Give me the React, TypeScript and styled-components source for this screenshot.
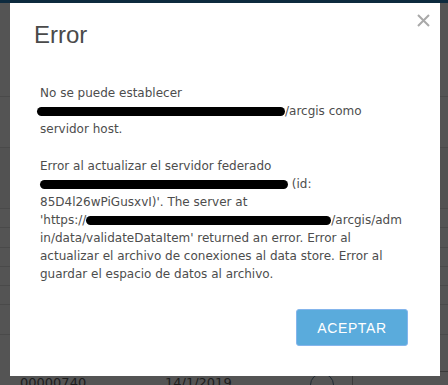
import React from "react";
import styled, { createGlobalStyle } from "styled-components";

const Global = createGlobalStyle`
  html, body { margin: 0; padding: 0; background: #545454; overflow: hidden; }
  #root { width: 448px; height: 385px; }
`;

const Screen = styled.div`
  position: relative;
  width: 448px;
  height: 385px;
  background: #545454;
  overflow: hidden;
  display: flex;
  flex-direction: column;
`;

const TopBar = styled.div`
  height: 3px;
  background: #0d2a3e;
  flex: none;
`;

const BgRow = styled.div<{ $h: number; $tone?: string }>`
  height: ${(p) => p.$h}px;
  flex: none;
  background: ${(p) => p.$tone || "#545454"};
  border-bottom: 1px solid #4a4a4a;
  box-sizing: border-box;
`;

const BottomRow = styled.div`
  flex: 1;
  display: flex;
  align-items: flex-start;
  padding-top: 40px;
  font-family: "DejaVu Sans", Verdana, sans-serif;
  font-size: 13px;
  line-height: 15px;
  color: #1c1c1c;
`;

const Cell = styled.div<{ $w: number; $pad?: number }>`
  width: ${(p) => p.$w}px;
  padding-left: ${(p) => p.$pad || 0}px;
  box-sizing: border-box;
  flex: none;
`;

const Circle = styled.div`
  width: 22px;
  height: 22px;
  border: 1.5px solid #1f2a33;
  border-radius: 50%;
  margin-top: -2px;
`;

const Box = styled.div`
  flex: 1;
  height: 30px;
  margin-top: -4px;
  border: 1px solid #3a3a3a;
  border-right: none;
`;

const Modal = styled.div`
  position: absolute;
  top: 3px;
  left: 10px;
  width: 430px;
  height: 373px;
  background: #ffffff;
  display: flex;
  flex-direction: column;
  box-sizing: border-box;
`;

const Close = styled.button`
  position: absolute;
  top: 7px;
  right: 7px;
  width: 20px;
  height: 20px;
  padding: 0;
  border: none;
  background: transparent;
  display: flex;
  align-items: center;
  justify-content: center;
`;

const Title = styled.h2`
  margin: 18px 0 0 24px;
  font-family: "Liberation Sans", Arial, sans-serif;
  font-weight: normal;
  font-size: 24px;
  line-height: 28px;
  color: #4a4a4a;
`;

const Body = styled.div`
  margin-top: 35px;
  padding: 0 20px 0 30px;
  font-family: "DejaVu Sans", Verdana, sans-serif;
  font-size: 12px;
  line-height: 18px;
  color: #4d4d4d;
`;

const Para = styled.p`
  margin: 0 0 19px 0;
  white-space: nowrap;
  &:last-child { margin-bottom: 0; }
`;

const Redact = styled.span<{ $w: number; $shift?: number }>`
  display: inline-block;
  width: ${(p) => p.$w}px;
  height: 9px;
  background: #000;
  border-radius: 5px;
  vertical-align: -1px;
  margin-left: ${(p) => p.$shift || 0}px;
`;

const Footer = styled.div`
  display: flex;
  justify-content: flex-end;
  padding: 26px 32px 0 0;
`;

const Button = styled.button`
  width: 112px;
  height: 37px;
  background: #5aabdc;
  border: 1px solid #84b5ec;
  border-radius: 3px;
  color: #ffffff;
  font-family: "Liberation Sans", Arial, sans-serif;
  font-size: 14px;
  letter-spacing: 0.6px;
  padding: 0;
  cursor: pointer;
`;

export default function App() {
  return (
    <>
      <Global />
      <Screen>
        <TopBar />
        <BgRow $h={94} />
        <BgRow $h={51} />
        <BgRow $h={61} $tone="#525252" />
        <BgRow $h={19} />
        <BgRow $h={20} />
        <BgRow $h={19} />
        <BgRow $h={19} />
        <BgRow $h={19} />
        <BgRow $h={30} />
        <BottomRow>
          <Cell $w={165} $pad={20}>00000740</Cell>
          <Cell $w={145}>14/1/2019</Cell>
          <Cell $w={42}>
            <Circle />
          </Cell>
          <Box />
        </BottomRow>

        <Modal>
          <Close aria-label="Cerrar">
            <svg width="13" height="13" viewBox="0 0 13 13">
              <path d="M1 1 L12 12 M12 1 L1 12" stroke="#a9a9a9" strokeWidth="2" />
            </svg>
          </Close>
          <Title>Error</Title>
          <Body>
            <Para>
              No se puede establecer
              <br />
              <Redact $w={248} $shift={-3} />/arcgis como
              <br />
              servidor host.
            </Para>
            <Para>
              Error al actualizar el servidor federado
              <br />
              <Redact $w={248} /> (id:
              <br />
              85D4l26wPiGusxvI)'. The server at
              <br />
              'https://<Redact $w={245} />/arcgis/adm
              <br />
              in/data/validateDataItem' returned an error. Error al
              <br />
              actualizar el archivo de conexiones al data store. Error al
              <br />
              guardar el espacio de datos al archivo.
            </Para>
          </Body>
          <Footer>
            <Button>ACEPTAR</Button>
          </Footer>
        </Modal>
      </Screen>
    </>
  );
}
